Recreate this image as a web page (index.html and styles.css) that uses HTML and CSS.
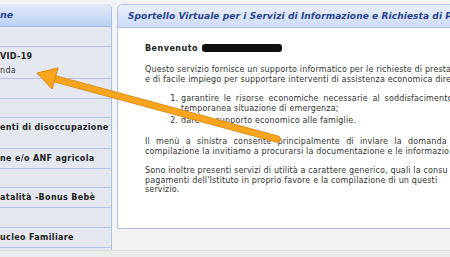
FILE: index.html
```
<!DOCTYPE html>
<html lang="it">
<head>
    <meta charset="UTF-8">
    <meta name="viewport" content="width=device-width, initial-scale=1.0">
    <title>Sportello Virtuale</title>
    <link rel="stylesheet" href="styles.css">
</head>
<body>

    <div class="page">
        <div class="menu">
            <div class="menu-head">ne</div>
            <div class="row"></div>
            <div class="row double">
                <b>VID-19</b>
                <span>nda</span>
            </div>
            <div class="row"></div>
            <div class="row short"></div>
            <div class="row double-b"><b>enti di disoccupazione</b></div>
            <div class="row"><b>ne e/o ANF agricola</b></div>
            <div class="row short"></div>
            <div class="row"><b>atalità -Bonus Bebè</b></div>
            <div class="row"></div>
            <div class="row"><b>ucleo Familiare</b></div>
        </div>

        <div class="panel">
            <div class="panel-head">Sportello Virtuale per i Servizi di Informazione e Richiesta di P</div>
            <div class="panel-body">
                <p class="welcome"><b>Benvenuto</b> <span class="hidden-name"></span></p>

                <p>
                    <span class="line">Questo servizio fornisce un supporto informatico per le richieste di presta</span>
                    <span class="line">e di facile impiego per supportare interventi di assistenza economica dire</span>
                </p>

                <ol>
                    <li><span class="line spaced">garantire le risorse economiche necessarie al soddisfacimento</span>
                        <span class="line">temporanea situazione di emergenza;</span></li>
                    <li><span class="line">dare un supporto economico alle famiglie.</span></li>
                </ol>

                <p>
                    <span class="line wide">Il menù a sinistra consente principalmente di inviare la domanda</span>
                    <span class="line">compilazione la invitiamo a procurarsi la documentazione e le informazio</span>
                </p>

                <p>
                    <span class="line">Sono inoltre presenti servizi di utilità a carattere generico, quali la consu</span>
                    <span class="line">pagamenti dell'Istituto in proprio favore e la compilazione di un questi</span>
                    <span class="line">servizio.</span>
                </p>
            </div>
        </div>
    </div>

    <div class="footer"></div>

    <!-- freccia sopra la pagina -->
    <svg class="arrow" width="450" height="257" viewBox="0 0 450 257">
        <line x1="277" y1="139" x2="52" y2="78" stroke="#d98a10" stroke-width="7.5" stroke-linecap="round"/>
        <line x1="277" y1="139" x2="52" y2="78" stroke="#f7a51f" stroke-width="5.5" stroke-linecap="round"/>
        <polygon points="37,73 58,68 52,89" fill="#f7a51f" stroke="#d98a10" stroke-width="1" stroke-linejoin="round"/>
    </svg>

</body>
</html>
```

FILE: styles.css
```
body {
    margin: 0;
    width: 450px;
    height: 257px;
    overflow: hidden;
    position: relative;
    background-color: #f3f3f3;
    font-family: "DejaVu Sans", Verdana, sans-serif;
    color: #333;
}
.page {
    display: flex;
    gap: 5px;
    padding-top: 4px;
    height: 246px;
}
.menu {
    width: 111px;
    flex: none;
    background-color: #e4e8ee;
    border-right: 1px solid #a9bfe6;
    border-top-right-radius: 5px;
}
.menu-head {
    height: 22px;
    line-height: 22px;
    border-bottom: 1px solid #9fb8e4;
    border-top-right-radius: 5px;
    background: linear-gradient(#e3ebfb, #bccff3);
    color: #2a4490;
    font-size: 9.5px;
    font-weight: bold;
    font-style: italic;
}
.row {
    height: 19px;
    border-bottom: 1px solid #b4c7ea;
    font-size: 8px;
    letter-spacing: 0.35px;
    color: #222;
    white-space: nowrap;
    overflow: hidden;
    display: flex;
    flex-direction: column;
    justify-content: center;
}
.row.short {
    height: 18px;
}
.row.double {
    height: 31px;
    justify-content: flex-start;
    line-height: 14px;
}
.row.double b {
    padding-top: 3px;
}
.row.double span {
    color: #333;
}
.row.double-b {
    height: 30px;
    justify-content: flex-start;
}
.row.double-b b {
    padding-top: 5px;
}
.panel {
    width: 360px;
    flex: none;
    height: 223px;
    background-color: white;
    border: 1px solid #aec3e8;
    border-top-left-radius: 5px;
    display: flex;
    flex-direction: column;
}
.panel-head {
    height: 22px;
    line-height: 22px;
    padding-left: 10px;
    border-bottom: 1px solid #a9c0e8;
    border-top-left-radius: 5px;
    background: linear-gradient(#eaf0fc, #cddbf5);
    color: #2a4490;
    font-size: 9px;
    letter-spacing: 0.1px;
    font-weight: bold;
    font-style: italic;
    white-space: nowrap;
    overflow: hidden;
}
.panel-body {
    padding: 16px 0 0 27px;
    font-size: 8px;
    letter-spacing: 0.15px;
    line-height: 9.6px;
    white-space: nowrap;
    overflow: hidden;
}
.panel-body p {
    margin: 0 0 10px 0;
}
.panel-body p.welcome {
    margin-bottom: 11.5px;
    color: #222;
    letter-spacing: 0.5px;
}
.hidden-name {
    display: inline-block;
    width: 80px;
    height: 8px;
    margin-left: 1px;
    vertical-align: -1px;
    background-color: #111;
    border-radius: 3px;
    filter: blur(0.6px);
}
.line {
    display: block;
}
.spaced {
    word-spacing: 2px;
}
.wide {
    word-spacing: 3.5px;
}
ol {
    margin: 0 0 11px 0;
    padding-left: 36px;
}
li + li {
    margin-top: 3px;
}
.footer {
    height: 6px;
    border-top: 1px solid #dcdcdc;
    background-color: #ececec;
}
.arrow {
    position: absolute;
    left: 0;
    top: 0;
    pointer-events: none;
}
```
